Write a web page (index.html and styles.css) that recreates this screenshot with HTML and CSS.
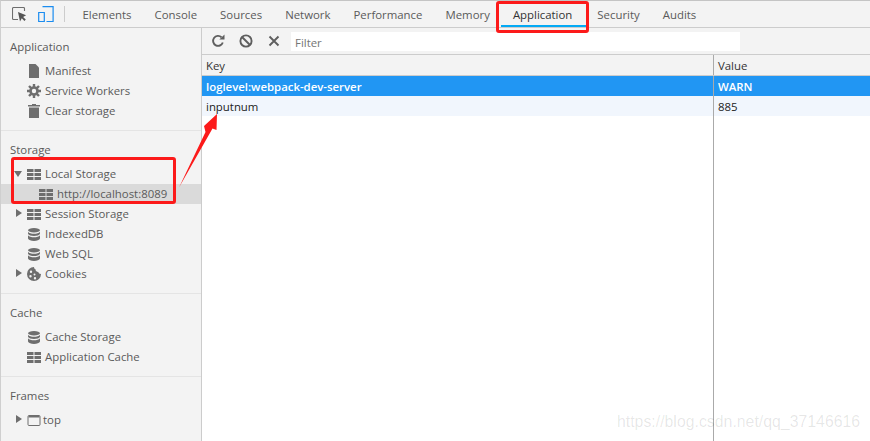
FILE: index.html
```html
<!DOCTYPE html>
<html lang="en">
<head>
<meta charset="utf-8">
<title>DevTools Application</title>
<link rel="stylesheet" href="styles.css">
</head>
<body>
<svg class="defs" width="0" height="0" aria-hidden="true">
  <symbol id="grid" viewBox="0 0 14 11"><path d="M0 0h6.500v3H0zM7.500 0H14v3H7.500zM0 4h6.500v3H0zM7.500 4H14v3H7.500zM0 8h6.500v3H0zM7.500 8H14v3H7.500z"/></symbol>
  <symbol id="db" viewBox="0 0 12 13"><ellipse cx="6" cy="2.2" rx="6" ry="2.2"/><path d="M0 3.800c1 1.400 3.400 2 6 2s5-.6 6-2v2c-.6 1.500-3.200 2.200-6 2.200S.6 7.300 0 5.800zM0 7.300c1 1.400 3.400 2 6 2s5-.6 6-2v3.300c-.4 1.500-3.200 2.400-6 2.400s-5.600-.9-6-2.400z"/></symbol>
</svg>
<div class="app">
  <nav class="tabs">
    <svg class="tool-icon" width="15" height="15" viewBox="0 0 15 15"><path d="M6 12.500H1.500a1 1 0 0 1-1-1V1.500a1 1 0 0 1 1-1h10a1 1 0 0 1 1 1V4" fill="none" stroke="#6e6e6e" stroke-width="1.100"/><path d="M6 5l2 9.500 1.800-3.200 2.600 2.700 1.400-1.400-2.700-2.600 3-1.700z" fill="#555"/></svg>
    <svg class="tool-icon device" width="16" height="16" viewBox="0 0 16 16"><path d="M4.500.7h10.600v15H8.500M.7 6.500h5.600v9.200H.7z" fill="none" stroke="#1a8cf0" stroke-width="1.200"/></svg>
    <span class="tabs-sep"></span>
    <a class="tab">Elements</a>
    <a class="tab">Console</a>
    <a class="tab">Sources</a>
    <a class="tab">Network</a>
    <a class="tab">Performance</a>
    <a class="tab">Memory</a>
    <a class="tab active">Application</a>
    <a class="tab">Security</a>
    <a class="tab">Audits</a>
  </nav>
  <div class="body">
    <aside class="sidebar">
      <section class="group">
        <h3 class="group-title">Application</h3>
        <div class="row"><svg class="icon" width="12" height="14" viewBox="0 0 14 14"><path d="M2 0h6.500L12 3.500V14H2z" fill="#6e6e6e"/></svg><span>Manifest</span></div>
        <div class="row"><svg class="icon" width="14" height="14" viewBox="0 0 14 14"><circle cx="7" cy="7" r="3.500" fill="none" stroke="#6e6e6e" stroke-width="2.600"/><path d="M7 0v3M7 11v3M0 7h3M11 7h3M2 2l2.200 2.200M9.800 9.800L12 12M12 2L9.800 4.200M4.200 9.800L2 12" stroke="#6e6e6e" stroke-width="2.400"/></svg><span>Service Workers</span></div>
        <div class="row"><svg class="icon" width="12" height="14" viewBox="0 0 14 14"><path d="M1 1h4V0h4v1h4v1.500H1zM2 3.500h10V14H2z" fill="#6e6e6e"/></svg><span>Clear storage</span></div>
      </section>
      <section class="group">
        <h3 class="group-title">Storage</h3>
        <div class="row"><i class="caret open"></i><svg class="icon grid"><use href="#grid"/></svg><span>Local Storage</span></div>
        <div class="row nested selected"><svg class="icon grid"><use href="#grid"/></svg><span>http://localhost:8089</span></div>
        <div class="row"><i class="caret"></i><svg class="icon grid"><use href="#grid"/></svg><span>Session Storage</span></div>
        <div class="row"><svg class="icon db"><use href="#db"/></svg><span>IndexedDB</span></div>
        <div class="row"><svg class="icon db"><use href="#db"/></svg><span>Web SQL</span></div>
        <div class="row"><i class="caret"></i><svg class="icon" width="14" height="14" viewBox="0 0 14 14"><path fill-rule="evenodd" d="M7 0a7 7 0 1 0 7 7c-1.500 0-2.500-.8-2.700-2C9.800 5 8.500 4 8.500 2.300 7.500 2 7 1 7 0zM4 3.500a1.200 1.200 0 1 1 0 2.400 1.200 1.200 0 0 1 0-2.400zM3.500 8a1.200 1.200 0 1 1 0 2.400 1.200 1.200 0 0 1 0-2.400zM7.500 6.500a1 1 0 1 1 0 2 1 1 0 0 1 0-2zM8 10a1.200 1.200 0 1 1 0 2.400A1.200 1.200 0 0 1 8 10z" fill="#6e6e6e"/></svg><span>Cookies</span></div>
      </section>
      <section class="group">
        <h3 class="group-title">Cache</h3>
        <div class="row"><svg class="icon db"><use href="#db"/></svg><span>Cache Storage</span></div>
        <div class="row"><svg class="icon grid"><use href="#grid"/></svg><span>Application Cache</span></div>
      </section>
      <section class="group last">
        <h3 class="group-title">Frames</h3>
        <div class="row frame"><i class="caret"></i><svg class="icon" width="13" height="11" viewBox="0 0 13 11"><path d="M.5 1.500a1 1 0 0 1 1-1h10a1 1 0 0 1 1 1v8a1 1 0 0 1-1 1h-10a1 1 0 0 1-1-1z" fill="none" stroke="#6e6e6e"/><path d="M1 1h11v1.500H1z" fill="#6e6e6e"/></svg><span>top</span></div>
      </section>
    </aside>
    <main class="main">
      <div class="toolbar">
        <svg class="tb-icon" width="14" height="14" viewBox="0 0 14 14"><path d="M11.800 8.500A5 5 0 1 1 10.500 3.200" fill="none" stroke="#5f5f5f" stroke-width="1.900"/><path d="M8.300 5.600h5.200V.4z" fill="#5f5f5f"/></svg>
        <svg class="tb-icon" width="14" height="14" viewBox="0 0 14 14"><circle cx="7" cy="7" r="5.600" fill="none" stroke="#5f5f5f" stroke-width="1.900"/><path d="M3 3l8 8" stroke="#5f5f5f" stroke-width="1.900"/></svg>
        <svg class="tb-icon" width="14" height="14" viewBox="0 0 14 14"><path d="M2.500 2.500l9 9M11.500 2.500l-9 9" stroke="#5f5f5f" stroke-width="1.900"/></svg>
        <div class="filter">Filter</div>
      </div>
      <div class="table">
        <div class="tr head"><div class="td key">Key</div><div class="td val">Value</div></div>
        <div class="tr picked"><div class="td key">loglevel:webpack-dev-server</div><div class="td val">WARN</div></div>
        <div class="tr even"><div class="td key">inputnum</div><div class="td val">885</div></div>
        <div class="tr fill"><div class="td key"></div><div class="td val"></div></div>
      </div>
    </main>
  </div>
</div>
<div class="mark mark-tab"></div>
<div class="mark mark-local"></div>
<svg class="arrow" width="42" height="76" viewBox="0 0 42 76"><path d="M1 73.500L27.500 18 26 12 39 0 38.500 16 34.500 14.500z" fill="#fc1a1a"/></svg>
<div class="watermark">https://blog.csdn.net/qq_37146616</div>
</body>
</html>
```
FILE: styles.css
```css
* { box-sizing: border-box; }
html, body { margin: 0; height: 100%; }
body {
  position: relative;
  width: 870px;
  height: 441px;
  overflow: hidden;
  background: #fff;
  font-family: "Open Sans", "Noto Sans", sans-serif;
  font-size: 11.4px;
  color: #333;
}
.defs { position: absolute; }
.app {
  display: flex;
  flex-direction: column;
  height: 441px;
  border-top: 1px solid #c4c4c4;
  border-left: 1px solid #cfcfcf;
}
.tabs {
  flex: 0 0 27px;
  display: flex;
  align-items: center;
  background: #f3f3f3;
  border-bottom: 1px solid #ccc;
  padding-left: 11px;
}
.tool-icon { flex: none; margin-right: 11px; }
.tabs-sep { width: 1px; height: 16px; background: #ccc; margin-right: 6px; margin-left: -1px; }
.tab {
  height: 26px;
  line-height: 28px;
  padding: 0 11.5px;
  font-size: 11.4px;
  color: #5a5a5a;
  white-space: nowrap;
}
.tab.active { color: #333; border-bottom: 2px solid #03a9f4; padding-right: 13.5px; }
.body { flex: 1; display: flex; min-height: 0; }
.sidebar {
  flex: 0 0 201px;
  background: #f3f3f3;
  border-right: 1px solid #ccc;
  display: flex;
  flex-direction: column;
}
.group { border-bottom: 1px solid #e4e4e4; padding-bottom: 9px; }
.group.last { border-bottom: 0; }
.group-title {
  margin: 0;
  height: 33px;
  padding: 10px 0 0 9px;
  line-height: 18px;
  font-size: 11.4px;
  font-weight: 400;
  color: #5a5a5a;
}
.row {
  position: relative;
  display: flex;
  align-items: center;
  height: 20px;
  padding-left: 26px;
  color: #5a5a5a;
  white-space: nowrap;
}
.row span { margin-left: 4px; line-height: 18px; }
.row .icon { flex: none; width: 14px; display: block; }
.icon.grid { height: 11px; fill: #6e6e6e; }
.icon.db { height: 13px; fill: #6e6e6e; }
.row.nested { padding-left: 38px; }
.row.selected { background: #dadada; }
.row.frame span { margin-left: 2px; }
.caret {
  position: absolute;
  left: 15px;
  top: 5px;
  width: 0;
  height: 0;
  border-style: solid;
  border-width: 4.500px 0 4.500px 6px;
  border-color: transparent transparent transparent #6e6e6e;
}
.caret.open {
  left: 13px;
  top: 7px;
  border-width: 6px 4.500px 0 4.500px;
  border-color: #6e6e6e transparent transparent transparent;
}
.main { flex: 1; display: flex; flex-direction: column; min-width: 0; }
.toolbar {
  flex: 0 0 27px;
  display: flex;
  align-items: center;
  background: #f3f3f3;
  border-bottom: 1px solid #ccc;
  padding-left: 9px;
}
.tb-icon { flex: none; margin-right: 14px; }
.tb-icon:nth-child(3) { margin-right: 10px; }
.filter {
  width: 449px;
  height: 19px;
  background: #fff;
  padding-left: 4px;
  line-height: 21px;
  color: #757575;
}
.table { flex: 1; display: flex; flex-direction: column; }
.tr { display: flex; height: 20px; flex: none; line-height: 21px; color: #222; }
.td { padding-left: 4px; white-space: nowrap; }
.key { flex: 0 0 511px; }
.val { flex: 1; border-left: 1px solid #aaa; padding-left: 4px; }
.head { height: 21px; background: #f3f3f3; border-bottom: 1px solid #ccc; color: #333; }
.picked { background: #2196f3; color: #fff; font-weight: 600; }
.even { background: #f1f6fd; }
.tr.fill { flex: 1; }
.mark { position: absolute; border: 3px solid #fc1a1a; border-radius: 3px; }
.mark-tab { left: 496px; top: 1px; width: 93px; height: 32px; }
.mark-local { left: 11px; top: 157px; width: 165px; height: 47px; }
.arrow { position: absolute; left: 178px; top: 114px; }
.watermark {
  position: absolute;
  left: 617px;
  top: 413px;
  font-family: "Liberation Sans", sans-serif;
  font-size: 15.85px;
  line-height: 18px;
  white-space: nowrap;
  color: rgba(0, 0, 0, 0.1);
}
```
